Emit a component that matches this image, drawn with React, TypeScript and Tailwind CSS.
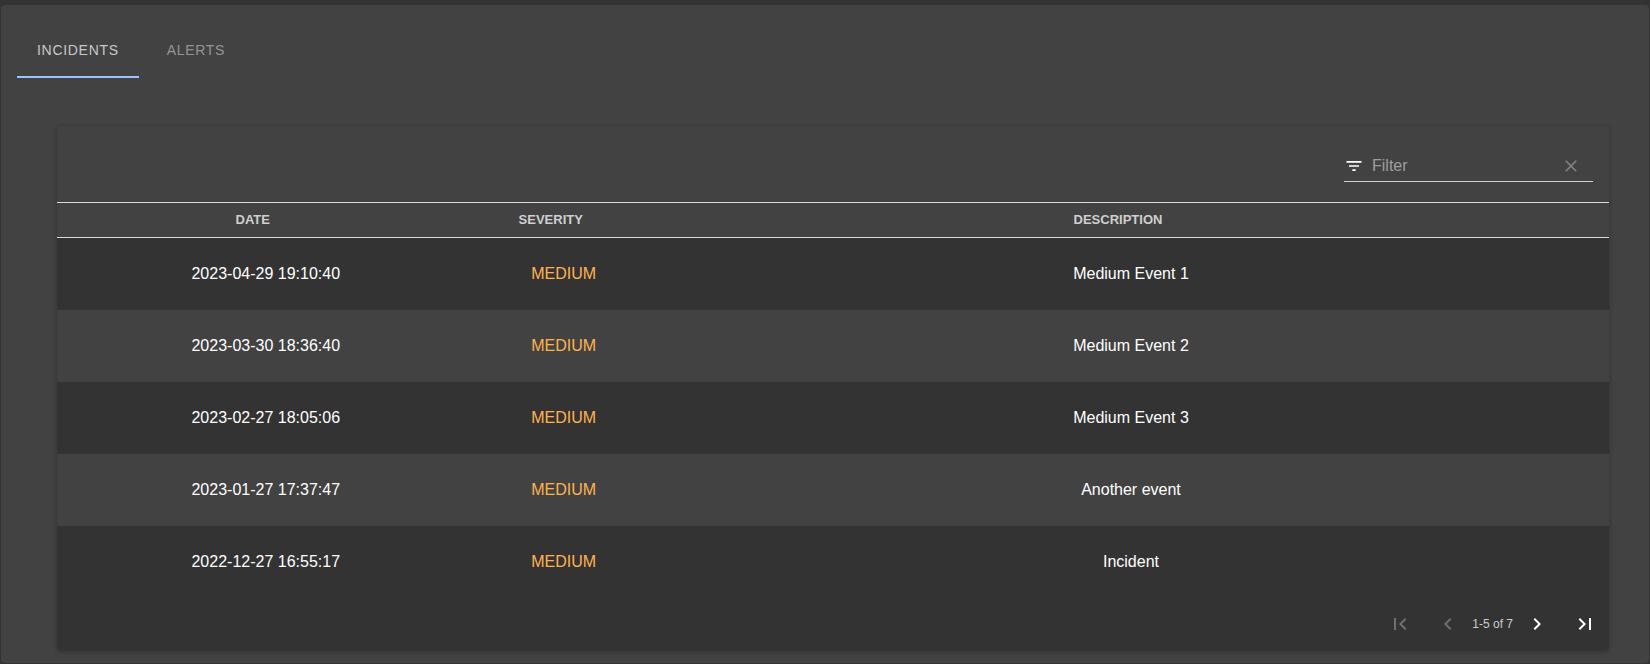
import { useState } from 'react';
import type { ReactNode } from 'react';
import {
  MdChevronLeft,
  MdChevronRight,
  MdClear,
  MdFilterList,
  MdFirstPage,
  MdLastPage,
} from 'react-icons/md';

const incidents = [
  { date: '2023-04-29 19:10:40', severity: 'MEDIUM', description: 'Medium Event 1' },
  { date: '2023-03-30 18:36:40', severity: 'MEDIUM', description: 'Medium Event 2' },
  { date: '2023-02-27 18:05:06', severity: 'MEDIUM', description: 'Medium Event 3' },
  { date: '2023-01-27 17:37:47', severity: 'MEDIUM', description: 'Another event' },
  { date: '2022-12-27 16:55:17', severity: 'MEDIUM', description: 'Incident' },
];

function Tab({ active, onClick, children }: { active: boolean; onClick: () => void; children: ReactNode }) {
  return (
    <button
      type="button"
      role="tab"
      aria-selected={active}
      onClick={onClick}
      className={
        'h-14 border-b-2 px-5 pt-0.5 text-sm tracking-wider uppercase ' +
        (active ? 'border-[#99c4ff] text-[#c8c8c8]' : 'border-transparent text-[#959595]')
      }
    >
      {children}
    </button>
  );
}

function PageButton({ label, disabled, children }: { label: string; disabled?: boolean; children: ReactNode }) {
  return (
    <button type="button" aria-label={label} disabled={disabled} className="p-3 text-white disabled:text-[#707070]">
      {children}
    </button>
  );
}

function HeaderCell({ className, children }: { className?: string; children: ReactNode }) {
  return (
    <th scope="col" className={'h-[35px] pr-[26px] text-center text-[13px] font-bold text-[#cfcfcf] uppercase ' + (className ?? '')}>
      {children}
    </th>
  );
}

export default function App() {
  const [tab, setTab] = useState('incidents');
  const [filter, setFilter] = useState('');
  const rows = incidents.filter((row) =>
    Object.values(row).some((value) => value.toLowerCase().includes(filter.toLowerCase())),
  );

  return (
    <div className="min-h-screen bg-[#333333] px-px pt-[5px] pb-px font-['Liberation_Sans',Arial,sans-serif] text-white">
      <main className="rounded bg-[#424242] pt-[17px] pr-10 pb-3 pl-4">
        <div role="tablist" className="flex gap-2">
          <Tab active={tab === 'incidents'} onClick={() => setTab('incidents')}>Incidents</Tab>
          <Tab active={tab === 'alerts'} onClick={() => setTab('alerts')}>Alerts</Tab>
        </div>

        <section className="mt-12 ml-10 overflow-hidden rounded bg-[#424242] shadow-[0_1px_4px_rgba(0,0,0,0.25)]">
          <div className="flex justify-end px-4 pt-6 pb-5">
            <div className="flex h-8 w-[249px] items-center border-b border-[#cfcfcf]">
              <MdFilterList size={20} className="shrink-0" />
              <input
                type="text"
                aria-label="Filter"
                placeholder="Filter"
                value={filter}
                onChange={(event) => setFilter(event.target.value)}
                className="ml-2 min-w-0 flex-1 bg-transparent text-base text-white outline-none placeholder:text-[#9e9e9e]"
              />
              <button
                type="button"
                aria-label="Clear filter"
                disabled={!filter}
                onClick={() => setFilter('')}
                className="px-3 text-white disabled:text-[#808080]"
              >
                <MdClear size={20} />
              </button>
            </div>
          </div>

          <table className="w-full table-fixed border-collapse text-base">
            <thead>
              <tr className="border-y border-[#dadada]">
                <HeaderCell className="w-[26.9%]">Date</HeaderCell>
                <HeaderCell className="w-[11.5%]">Severity</HeaderCell>
                <HeaderCell>Description</HeaderCell>
              </tr>
            </thead>
            <tbody>
              {rows.map((row) => (
                <tr key={row.date} className="h-18 text-center odd:bg-[#333333]">
                  <td>{row.date}</td>
                  <td className="text-[#ffb24d]">{row.severity}</td>
                  <td>{row.description}</td>
                </tr>
              ))}
            </tbody>
          </table>

          <nav aria-label="Pagination" className="flex h-[53px] items-center justify-end bg-[#333333] pb-px">
            <PageButton label="First page" disabled><MdFirstPage size={24} /></PageButton>
            <PageButton label="Previous page" disabled><MdChevronLeft size={24} /></PageButton>
            <span className="text-xs text-[#cccccc]">1-5 of 7</span>
            <PageButton label="Next page"><MdChevronRight size={24} /></PageButton>
            <PageButton label="Last page"><MdLastPage size={24} /></PageButton>
          </nav>
        </section>
      </main>
    </div>
  );
}
